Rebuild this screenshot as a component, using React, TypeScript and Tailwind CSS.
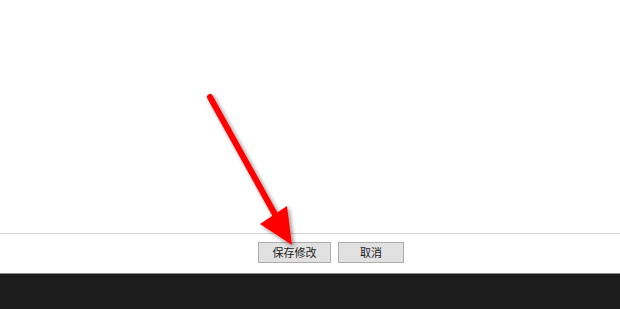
export default function App() {
    return (
        <div className="relative w-[620px] h-[309px] flex flex-col bg-white overflow-hidden font-['Noto_Sans_CJK_SC',sans-serif]">
            {/* Empty form area */}
            <div className="flex-1" />

            {/* Action bar */}
            <div className="h-[40px] border-t border-[#d4d4d4] flex items-center pl-[258px] gap-[7px] pb-[2px]">
                <button className="w-[73px] h-[21px] bg-[#e1e1e1] border border-[#adadad] text-[11px] leading-none text-[#1a1a1a]">
                    保存修改
                </button>
                <button className="w-[66px] h-[21px] bg-[#e1e1e1] border border-[#adadad] text-[11px] leading-none text-[#1a1a1a]">
                    取消
                </button>
            </div>

            {/* Dark footer */}
            <div className="h-[36px] bg-[#1d1d1d] border-t border-[#8a8a8a]" />

            {/* Annotation arrow */}
            <svg
                className="absolute left-0 top-0 pointer-events-none"
                width="620"
                height="309"
                viewBox="0 0 620 309"
            >
                <defs>
                    <filter id="shadow" x="-20%" y="-20%" width="140%" height="140%">
                        <feGaussianBlur in="SourceAlpha" stdDeviation="2" />
                        <feOffset dx="2" dy="2" result="blur" />
                        <feComponentTransfer>
                            <feFuncA type="linear" slope="0.45" />
                        </feComponentTransfer>
                        <feMerge>
                            <feMergeNode />
                            <feMergeNode in="SourceGraphic" />
                        </feMerge>
                    </filter>
                </defs>
                <g filter="url(#shadow)">
                    <line x1="210" y1="97" x2="277" y2="218" stroke="#ff0000" strokeWidth="6" strokeLinecap="round" />
                    <polygon points="292,245 260,224 287,206" fill="#ff0000" />
                </g>
            </svg>
        </div>
    );
}
